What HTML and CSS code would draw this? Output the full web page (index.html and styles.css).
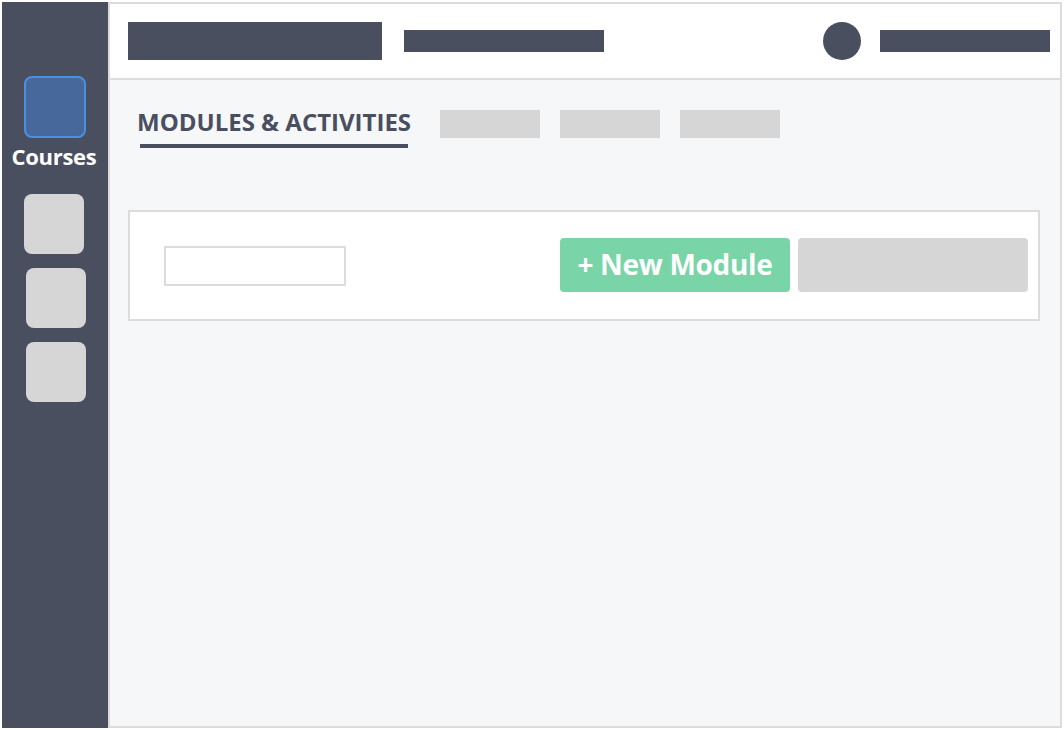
FILE: index.html
```html
<!DOCTYPE html>
<html>
<head>
<meta charset="utf-8">
<link rel="stylesheet" href="styles.css">
</head>
<body>
<div class="frame">
  <aside class="sidebar">
    <div class="nav-icon active"></div>
    <div class="nav-label">Courses</div>
    <div class="nav-icon gray first"></div>
    <div class="nav-icon gray shift"></div>
    <div class="nav-icon gray shift"></div>
  </aside>
  <main class="main">
    <header class="topbar">
      <div class="logo-block"></div>
      <div class="title-bar"></div>
      <div class="spacer"></div>
      <div class="avatar"></div>
      <div class="user-bar"></div>
    </header>
    <section class="content">
      <nav class="tabs">
        <div class="tab-active">
          <span class="tab-text">MODULES &amp; ACTIVITIES</span>
          <div class="tab-underline"></div>
        </div>
        <div class="tab-ph"></div>
        <div class="tab-ph"></div>
        <div class="tab-ph"></div>
      </nav>
      <div class="card">
        <div class="search-input"></div>
        <div class="actions">
          <button class="btn-new">+ New Module</button>
          <div class="btn-ph"></div>
        </div>
      </div>
    </section>
  </main>
</div>
</body>
</html>
```
FILE: styles.css
```css
html, body {
  margin: 0;
  padding: 0;
  background: #ffffff;
}
body {
  padding: 2px;
  width: 1060px;
  height: 726px;
  font-family: "Open Sans", "Liberation Sans", sans-serif;
}
.frame {
  display: flex;
  width: 1060px;
  height: 726px;
}
.sidebar {
  width: 106px;
  flex: none;
  background: #4a4f5f;
  display: flex;
  flex-direction: column;
  align-items: flex-start;
  padding-top: 74px;
  box-sizing: border-box;
}
.nav-icon {
  border-radius: 8px;
  margin-left: 22px;
}
.nav-icon.active {
  width: 58px;
  height: 58px;
  background: #46689a;
  border: 2px solid #4a90e2;
}
.nav-label {
  align-self: stretch;
  text-align: center;
  margin-top: 3px;
  margin-right: 2px;
  color: #ffffff;
  font-weight: 700;
  font-size: 22px;
  line-height: 30px;
  letter-spacing: -0.3px;
}
.nav-icon.gray {
  width: 60px;
  height: 60px;
  background: #d6d6d6;
}
.nav-icon.first {
  margin-top: 23px;
}
.nav-icon.shift {
  margin-left: 24px;
  margin-top: 14px;
}
.main {
  flex: 1;
  border: 2px solid #dcdcdc;
  background: #f6f7f9;
  display: flex;
  flex-direction: column;
}
.topbar {
  height: 74px;
  flex: none;
  background: #ffffff;
  border-bottom: 2px solid #dcdcdc;
  display: flex;
  align-items: center;
  padding: 0 10px 0 18px;
}
.logo-block {
  width: 254px;
  height: 38px;
  background: #4a4f5f;
}
.title-bar {
  width: 200px;
  height: 22px;
  margin-left: 22px;
  background: #4a4f5f;
}
.spacer {
  flex: 1;
}
.avatar {
  width: 38px;
  height: 38px;
  border-radius: 50%;
  background: #4a4f5f;
}
.user-bar {
  width: 170px;
  height: 22px;
  margin-left: 19px;
  background: #4a4f5f;
}
.content {
  flex: 1;
  padding: 26px 20px 0 18px;
}
.tabs {
  display: flex;
  align-items: flex-start;
}
.tab-active {
  display: flex;
  flex-direction: column;
  margin-left: 9px;
}
.tab-text {
  font-size: 24px;
  line-height: 30px;
  font-weight: 700;
  color: #4a4f5f;
  white-space: nowrap;
  letter-spacing: 0;
  margin-top: 1px;
}
.tab-underline {
  height: 4px;
  margin: 7px 3px 0 3px;
  background: #4a4f5f;
}
.tab-ph {
  width: 100px;
  height: 28px;
  margin-top: 4px;
  margin-left: 20px;
  background: #d6d6d6;
}
.tab-active + .tab-ph {
  margin-left: 29px;
}
.card {
  margin-top: 62px;
  background: #ffffff;
  border: 2px solid #dcdcdc;
  display: flex;
  align-items: center;
  padding: 26px 10px 27px 34px;
}
.search-input {
  width: 178px;
  height: 36px;
  border: 2px solid #dcdcdc;
  background: #ffffff;
  margin-top: 2px;
}
.actions {
  margin-left: auto;
  display: flex;
  gap: 8px;
}
.btn-new {
  width: 230px;
  height: 54px;
  border: none;
  border-radius: 4px;
  background: #79d4a8;
  color: #ffffff;
  font-family: "Open Sans", "Liberation Sans", sans-serif;
  font-weight: 700;
  font-size: 28px;
  letter-spacing: -0.3px;
  padding: 0 0 2px 0;
}
.btn-ph {
  width: 230px;
  height: 54px;
  border-radius: 4px;
  background: #d6d6d6;
}
```
